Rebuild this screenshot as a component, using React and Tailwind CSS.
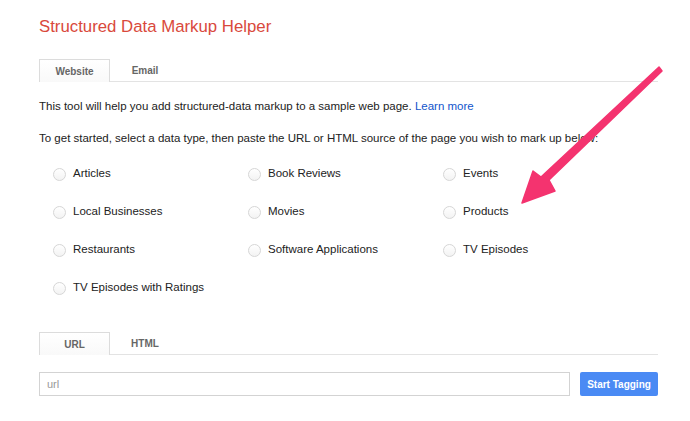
import React from "react";

const TYPES = [
  "Articles",
  "Book Reviews",
  "Events",
  "Local Businesses",
  "Movies",
  "Products",
  "Restaurants",
  "Software Applications",
  "TV Episodes",
  "TV Episodes with Ratings",
];

function Tabs({ items }) {
  return (
    <div className="flex h-[23px] border-b border-[#e3e3e3]">
      {items.map((t, i) => (
        <div
          key={t}
          className={
            i === 0
              ? "-mb-px flex w-[71px] items-center justify-center border border-b-0 border-[#dcdcdc] bg-gradient-to-b from-white to-[#f9f9f9] text-[10px] font-bold text-[#666]"
              : "flex w-[70px] items-center justify-center text-[10px] font-bold text-[#666]"
          }
        >
          {t}
        </div>
      ))}
    </div>
  );
}

export default function App() {
  return (
    <div
      className="relative h-[421px] w-[690px] overflow-hidden bg-white text-[#222]"
      style={{ fontFamily: '"Liberation Sans", Arial, sans-serif' }}
    >
      <div className="w-[658px] pl-[39px] pt-[15px]">
        <h1 className="text-[16.8px] leading-[24px] text-[#d9493c]">
          Structured Data Markup Helper
        </h1>

        <div className="mt-[20px]">
          <Tabs items={["Website", "Email"]} />
        </div>

        <p className="mt-[17px] text-[11.5px] leading-[14px]">
          This tool will help you add structured-data markup to a sample web page.{" "}
          <a className="text-[#1155cc]">Learn more</a>
        </p>
        <p className="mt-[18px] text-[11.5px] leading-[14px]">
          To get started, select a data type, then paste the URL or HTML source of the page you wish to mark up below:
        </p>

        <div className="mt-[22px] grid grid-cols-[195px_195px_195px] gap-y-[24px] pl-[14px]">
          {TYPES.map((t) => (
            <label key={t} className="flex h-[14px] items-center gap-[7px] text-[11.5px]">
              <span className="h-[13px] w-[13px] rounded-full border border-[#d6d6d6] bg-gradient-to-b from-white to-[#f3f3f3]" />
              {t}
            </label>
          ))}
        </div>

        <div className="mt-[37px]">
          <Tabs items={["URL", "HTML"]} />
        </div>

        <div className="mt-[17px] flex items-center gap-[10px]">
          <div className="flex h-[24px] w-[531px] items-center border border-[#d3d3d3] px-[7px] text-[11px] text-[#999]">
            url
          </div>
          <button className="h-[24px] w-[78px] rounded-[2px] bg-[#4a8af4] text-[10px] font-bold text-white">
            Start Tagging
          </button>
        </div>
      </div>

      <svg className="absolute left-0 top-0" width="690" height="421" viewBox="0 0 690 421">
        <polygon
          points="659,67 662,71 549,180 555,191 522,203 533,171 541,177"
          fill="#f4336f"
          stroke="#f4336f"
          strokeLinejoin="round"
          strokeWidth="1.5"
        />
      </svg>
    </div>
  );
}
